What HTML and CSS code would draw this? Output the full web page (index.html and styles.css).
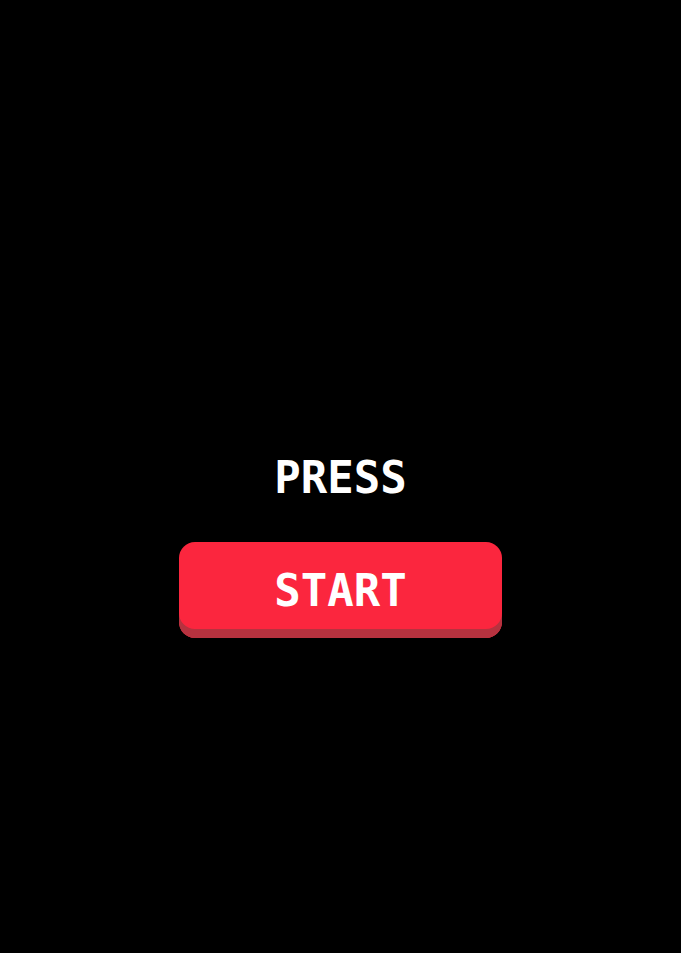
FILE: index.html
```html
<!DOCTYPE html>
<html lang="en">
<head>
  <meta charset="UTF-8">
  <title>Press Start</title>
  <meta name="viewport" content="width=device-width, initial-scale=1.0">
  <link rel="stylesheet" href="styles.css">
</head>
<body>

<main class="screen">
  <p class="press">PRESS</p>
  <button type="button" class="start">START</button>
</main>

</body>
</html>
```

FILE: styles.css
```css
* {
  box-sizing: border-box;
}

body {
  margin: 0;
  background-color: #000;
  color: #fff;
}

/* PRESS sits in the middle row, the button right below it */
.screen {
  min-height: 100vh;
  padding-top: 2px;
  display: grid;
  grid-template-rows: 1fr auto 1fr;
  justify-items: center;
  align-items: start;
}

.press,
.start {
  font-family: "DejaVu Sans Mono", monospace;
  font-size: 44px;
  font-weight: bold;
  line-height: 48px;
}

.press {
  grid-row: 2;
  margin: 0;
}

.start {
  grid-row: 3;
  width: 90%;
  max-width: 323px;
  margin-top: 40px;
  padding: 25px 24px 23px;
  border: none;
  border-radius: 16px;
  background-color: #fb263e;
  color: #fff;
  box-shadow: inset 0 -9px 0 #b6323f;
  cursor: pointer;
}

.start:active {
  box-shadow: inset 0 -4px 0 #b6323f;
}
```
